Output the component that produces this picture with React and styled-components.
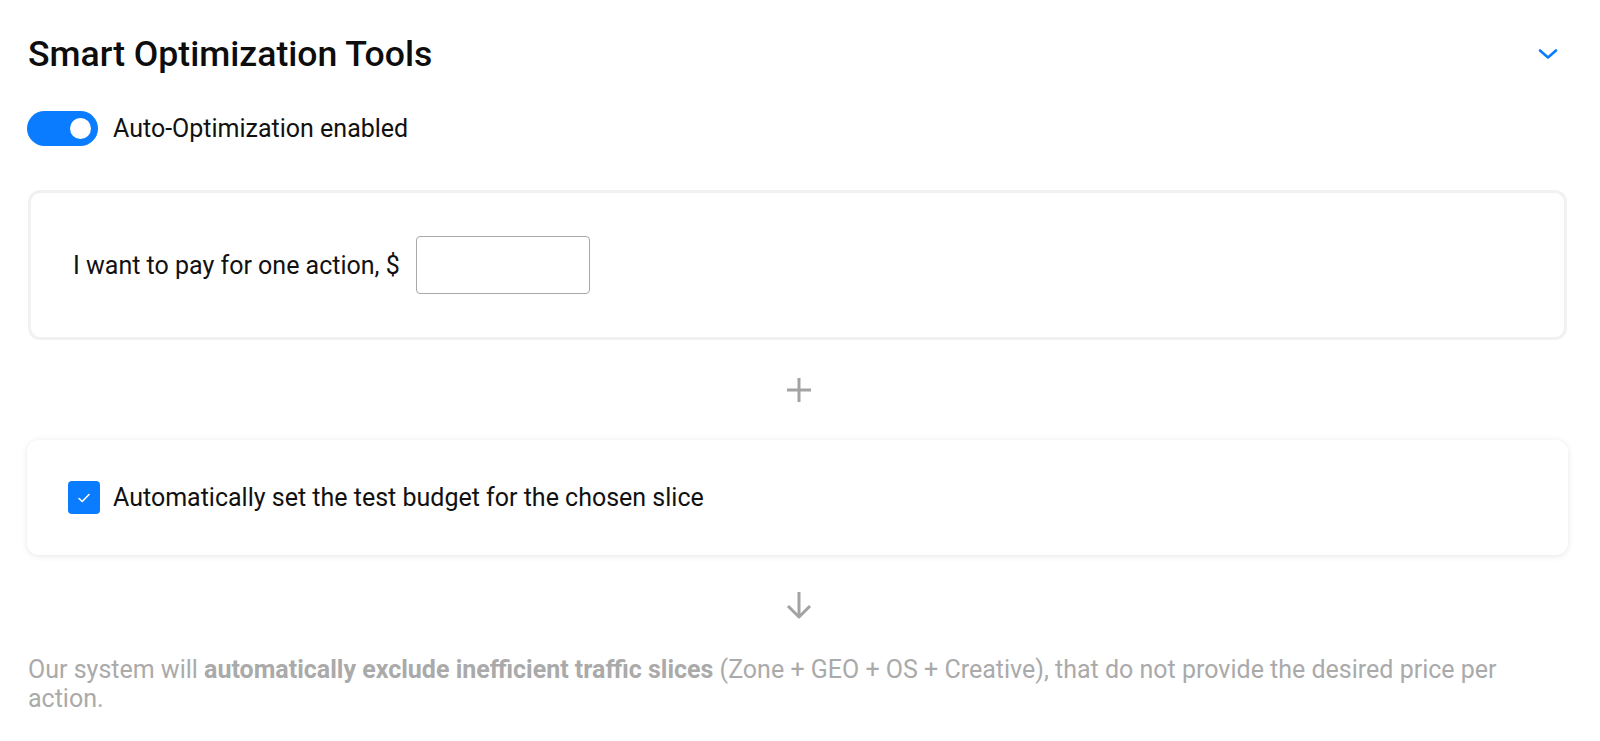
import React from "react";
import styled, { createGlobalStyle } from "styled-components";

const Global = createGlobalStyle`
  html, body { margin: 0; padding: 0; background: #fff; }
  body { font-family: Roboto, "Noto Sans", sans-serif; color: #111; }
`;

const Page = styled.div`
  padding: 24px 32px 0 28px;
  display: flex;
  flex-direction: column;
`;

const Header = styled.div`
  display: flex;
  align-items: center;
  justify-content: space-between;
  height: 60px;
`;

const Title = styled.h2`
  margin: 0;
  font-size: 35.6px;
  font-weight: 500;
  color: #0d0d0d;
`;

const Chevron = styled.button`
  border: none;
  background: none;
  padding: 0;
  margin-right: 8px;
  display: flex;
  color: #0a7cff;
  cursor: pointer;
`;

const ToggleRow = styled.label`
  display: flex;
  align-items: center;
  gap: 15px;
  margin-top: 27px;
  height: 35px;
  font-size: 25px;
  color: #111;
`;

const Switch = styled.span`
  position: relative;
  width: 71px;
  height: 35px;
  border-radius: 18px;
  background: ${(p) => (p.$on ? "#0a7cff" : "#ccc")};
  margin-left: -1px;
  flex: none;
  &::after {
    content: "";
    position: absolute;
    top: 7px;
    left: ${(p) => (p.$on ? "43px" : "7px")};
    width: 21px;
    height: 21px;
    border-radius: 50%;
    background: #fff;
  }
`;

const Card = styled.div`
  border-radius: 12px;
  background: #fff;
  display: flex;
  align-items: center;
  box-sizing: border-box;
  ${(p) =>
    p.$shadow
      ? `box-shadow: 0 1px 6px rgba(0,0,0,0.10); margin-left: -1px;`
      : `border: 3px solid #f1f1f1; margin-right: 1px;`}
`;

const PriceCard = styled(Card)`
  margin-top: 44px;
  height: 150px;
  padding-left: 42px;
  gap: 16px;
`;

const BudgetCard = styled(Card)`
  height: 115px;
  padding-left: 41px;
  gap: 13px;
`;

const Label = styled.span`
  font-size: 25px;
  color: #111;
`;

const Input = styled.input`
  width: 174px;
  height: 58px;
  box-sizing: border-box;
  border: 1px solid #a9a9a9;
  border-radius: 4px;
  font-size: 25px;
  font-family: inherit;
  padding: 0 12px;
  outline: none;
`;

const Connector = styled.div`
  display: flex;
  justify-content: center;
  align-items: center;
  height: ${(p) => p.$h}px;
  color: #a3a3a3;
  padding-left: 2px;
`;

const Checkbox = styled.span`
  width: 32px;
  height: 33px;
  border-radius: 4px;
  background: #0a7cff;
  display: flex;
  align-items: center;
  justify-content: center;
  flex: none;
  color: #fff;
`;

const Note = styled.p`
  margin: 0;
  font-size: 25px;
  line-height: 29px;
  color: #aaaaaa;
  padding-right: 20px;
  b { font-weight: 700; }
`;

export default function App() {
  return (
    <>
      <Global />
      <Page>
        <Header>
          <Title>Smart Optimization Tools</Title>
          <Chevron aria-label="collapse">
            <svg width="24" height="24" viewBox="0 0 24 24" fill="none" stroke="currentColor" strokeWidth="2.6" strokeLinecap="round" strokeLinejoin="round">
              <path d="M4 8.5l8 7 8-7" />
            </svg>
          </Chevron>
        </Header>
        <ToggleRow>
          <Switch $on />
          Auto-Optimization enabled
        </ToggleRow>
        <PriceCard>
          <Label>I want to pay for one action, $</Label>
          <Input />
        </PriceCard>
        <Connector $h={100}>
          <svg width="26" height="26" viewBox="0 0 26 26" stroke="currentColor" strokeWidth="3" fill="none">
            <path d="M13 1v24M1 13h24" />
          </svg>
        </Connector>
        <BudgetCard $shadow>
          <Checkbox>
            <svg width="16" height="16" viewBox="0 0 16 16" fill="none" stroke="currentColor" strokeWidth="1.6" strokeLinecap="round" strokeLinejoin="round">
              <path d="M3 8.5l3.2 3L13 4.5" />
            </svg>
          </Checkbox>
          <Label>Automatically set the test budget for the chosen slice</Label>
        </BudgetCard>
        <Connector $h={100}>
          <svg width="28" height="30" viewBox="0 0 28 30" stroke="currentColor" strokeWidth="3" fill="none" strokeLinejoin="round">
            <path d="M14 2v25M3 16l11 11 11-11" />
          </svg>
        </Connector>
        <Note>
          Our system will <b>automatically exclude inefficient traffic slices</b> (Zone + GEO + OS + Creative), that do not provide the desired price per action.
        </Note>
      </Page>
    </>
  );
}
